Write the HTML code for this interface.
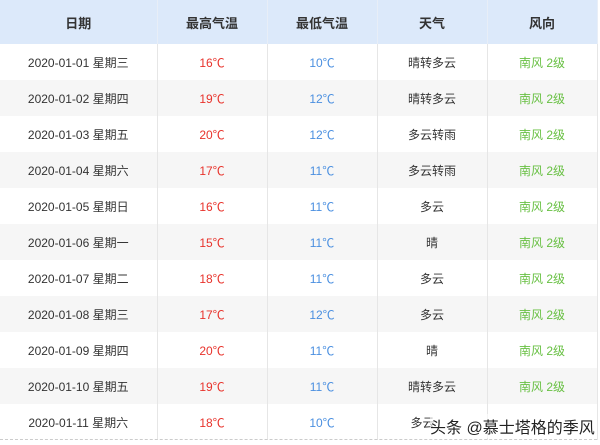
<html><head><style>
body{margin:0;width:600px;height:445px;background:#fff;overflow:hidden;font-family:"Liberation Sans","Noto Sans CJK SC",sans-serif;}
table{border-collapse:collapse;width:597px;table-layout:fixed;position:absolute;left:0;top:0;}
td,th{text-align:center;font-size:12px;color:#333;border-right:1px solid #e6e6e6;padding:0;}
th{height:44px;background:#dce9fa;font-weight:bold;font-size:13px;color:#333;border-right:1px solid #e8eef7;}
td{height:36px;}
tr:nth-child(odd) td{background:#f6f6f6}
.r{color:#e8322b}.b{color:#4a8fe0}.g{color:#68c043}
.wm{position:absolute;left:430px;top:414px;font-size:16px;color:#222;text-shadow:0 0 2px #fff;background:rgba(255,255,255,.6)}
.dash{position:absolute;left:0;top:439px;width:597px;border-top:1px dashed #ccc}
</style></head><body>
<table>
<colgroup><col style="width:157px"><col style="width:110px"><col style="width:110px"><col style="width:110px"><col style="width:110px"></colgroup>
<tr><th>日期</th><th>最高气温</th><th>最低气温</th><th>天气</th><th>风向</th></tr>
<tr><td>2020-01-01 星期三</td><td class="r">16℃</td><td class="b">10℃</td><td>晴转多云</td><td class="g">南风 2级</td></tr>
<tr><td>2020-01-02 星期四</td><td class="r">19℃</td><td class="b">12℃</td><td>晴转多云</td><td class="g">南风 2级</td></tr>
<tr><td>2020-01-03 星期五</td><td class="r">20℃</td><td class="b">12℃</td><td>多云转雨</td><td class="g">南风 2级</td></tr>
<tr><td>2020-01-04 星期六</td><td class="r">17℃</td><td class="b">11℃</td><td>多云转雨</td><td class="g">南风 2级</td></tr>
<tr><td>2020-01-05 星期日</td><td class="r">16℃</td><td class="b">11℃</td><td>多云</td><td class="g">南风 2级</td></tr>
<tr><td>2020-01-06 星期一</td><td class="r">15℃</td><td class="b">11℃</td><td>晴</td><td class="g">南风 2级</td></tr>
<tr><td>2020-01-07 星期二</td><td class="r">18℃</td><td class="b">11℃</td><td>多云</td><td class="g">南风 2级</td></tr>
<tr><td>2020-01-08 星期三</td><td class="r">17℃</td><td class="b">12℃</td><td>多云</td><td class="g">南风 2级</td></tr>
<tr><td>2020-01-09 星期四</td><td class="r">20℃</td><td class="b">11℃</td><td>晴</td><td class="g">南风 2级</td></tr>
<tr><td>2020-01-10 星期五</td><td class="r">19℃</td><td class="b">11℃</td><td>晴转多云</td><td class="g">南风 2级</td></tr>
<tr><td>2020-01-11 星期六</td><td class="r">18℃</td><td class="b">10℃</td><td style="text-align:left;padding-left:33px">多云</td><td class="g"></td></tr>
</table>
<div class="dash"></div>
<div class="wm">头条 @慕士塔格的季风</div>
</body></html>
